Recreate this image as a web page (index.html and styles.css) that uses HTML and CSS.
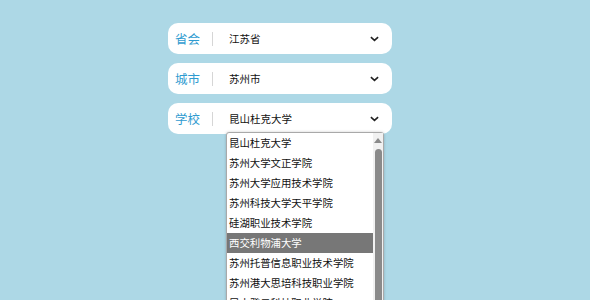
FILE: index.html
```html
<!DOCTYPE html>
<html lang="zh-CN">
<head>
<meta charset="utf-8">
<link rel="stylesheet" href="styles.css">
</head>
<body>
<div class="form">
  <div class="field">
    <span class="label">省会</span>
    <span class="sep"></span>
    <span class="value">江苏省</span>
    <svg class="chev" viewBox="0 0 10 6" width="9" height="6"><path d="M1 1 L5 4.5 L9 1" fill="none" stroke="#222" stroke-width="1.8"/></svg>
  </div>
  <div class="field">
    <span class="label">城市</span>
    <span class="sep"></span>
    <span class="value">苏州市</span>
    <svg class="chev" viewBox="0 0 10 6" width="9" height="6"><path d="M1 1 L5 4.5 L9 1" fill="none" stroke="#222" stroke-width="1.8"/></svg>
  </div>
  <div class="field">
    <span class="label">学校</span>
    <span class="sep"></span>
    <span class="value">昆山杜克大学</span>
    <svg class="chev" viewBox="0 0 10 6" width="9" height="6"><path d="M1 1 L5 4.5 L9 1" fill="none" stroke="#222" stroke-width="1.8"/></svg>
  </div>
</div>
<div class="dropdown">
  <ul class="options">
    <li>昆山杜克大学</li>
    <li>苏州大学文正学院</li>
    <li>苏州大学应用技术学院</li>
    <li>苏州科技大学天平学院</li>
    <li>硅湖职业技术学院</li>
    <li class="active">西交利物浦大学</li>
    <li>苏州托普信息职业技术学院</li>
    <li>苏州港大思培科技职业学院</li>
    <li>昆山登云科技职业学院</li>
  </ul>
  <div class="scrollbar">
    <svg class="arrow" viewBox="0 0 8 5" width="8" height="5"><path d="M0 5 L4 0 L8 5 Z" fill="#8a8a8a"/></svg>
    <div class="thumb"></div>
  </div>
</div>
</body>
</html>
```
FILE: styles.css
```css
html, body {
  margin: 0;
  padding: 0;
  height: 100%;
  overflow: hidden;
}
body {
  background: #add8e6;
  font-family: "Noto Sans CJK SC", "Noto Sans", sans-serif;
  position: relative;
}
.form {
  display: flex;
  flex-direction: column;
  gap: 9px;
  width: 224px;
  margin-left: 168px;
  padding-top: 23px;
}
.field {
  height: 31px;
  background: #fff;
  border-radius: 10px;
  display: flex;
  align-items: center;
  padding-left: 7px;
  padding-right: 13px;
  box-sizing: border-box;
}
.label {
  color: #2f9bd0;
  font-size: 12.5px;
  width: 37px;
}
.sep {
  width: 1px;
  height: 14px;
  background: #d6d6d6;
}
.value {
  flex: 1;
  font-size: 10.5px;
  color: #111;
  padding-left: 16px;
}
.chev {
  display: block;
}
.dropdown {
  position: absolute;
  left: 226px;
  top: 132px;
  width: 158px;
  height: 190px;
  background: #fff;
  border: 1px solid #a9a9a9;
  border-radius: 3px 3px 0 0;
  box-shadow: 0 0 3px rgba(0,0,0,0.2);
  display: flex;
  box-sizing: border-box;
}
.options {
  list-style: none;
  margin: 0;
  padding: 0;
  flex: 1;
}
.options li {
  height: 20px;
  line-height: 20px;
  font-size: 10.4px;
  color: #111;
  padding-left: 2px;
  white-space: nowrap;
  overflow: hidden;
}
.options li.active {
  background: #777;
  color: #fff;
}
.scrollbar {
  width: 10px;
  background: #f1f1f1;
  display: flex;
  flex-direction: column;
  align-items: center;
  padding-top: 5px;
}
.arrow {
  display: block;
}
.thumb {
  margin-top: 6px;
  width: 7px;
  flex: 1;
  background: #8a8a8a;
  border-radius: 4px;
}
```
